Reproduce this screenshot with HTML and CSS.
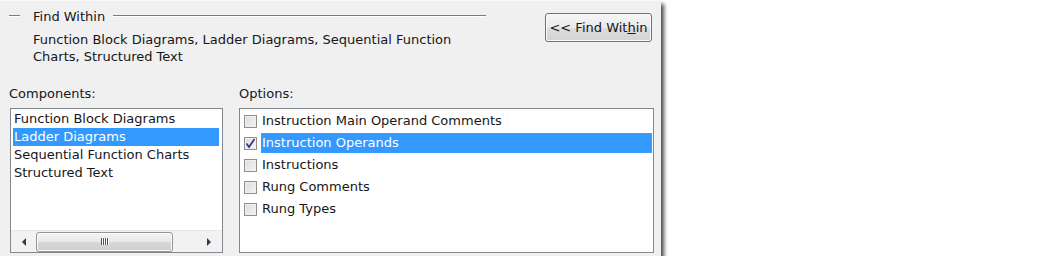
FILE: index.html
```html
<!DOCTYPE html>
<html>
<head>
<meta charset="utf-8">
<link rel="stylesheet" href="styles.css">
</head>
<body>
<div class="dialog">
  <div class="top">
    <div class="group">
      <div class="group-head">
        <span class="rule short"></span>
        <span class="group-title">Find Within</span>
        <span class="rule long"></span>
      </div>
      <div class="group-text">Function Block Diagrams, Ladder Diagrams, Sequential Function<br>Charts, Structured Text</div>
    </div>
    <button class="btn">&lt;&lt; Find Wit<u>h</u>in</button>
  </div>
  <div class="panes">
    <div class="pane">
      <div class="label">Components:</div>
      <div class="listbox comp">
        <div class="items">
          <div class="item">Function Block Diagrams</div>
          <div class="item sel">Ladder Diagrams</div>
          <div class="item">Sequential Function Charts</div>
          <div class="item">Structured Text</div>
        </div>
        <div class="hscroll">
          <span class="arrow left"></span>
          <div class="track">
            <div class="thumb"><span class="grip"></span><span class="grip"></span><span class="grip"></span><span class="grip"></span></div>
          </div>
          <span class="arrow right"></span>
        </div>
      </div>
    </div>
    <div class="pane">
      <div class="label">Options:</div>
      <div class="listbox opts">
        <div class="opt"><span class="cb"></span><span class="opt-text">Instruction Main Operand Comments</span></div>
        <div class="opt"><span class="cb checked"><svg width="11" height="11" viewBox="0 0 11 11"><path d="M1.5 5.5 L4 9 L9.5 1" fill="none" stroke="#25358a" stroke-width="1.6"/></svg></span><span class="opt-text sel">Instruction Operands</span></div>
        <div class="opt"><span class="cb"></span><span class="opt-text">Instructions</span></div>
        <div class="opt"><span class="cb"></span><span class="opt-text">Rung Comments</span></div>
        <div class="opt"><span class="cb"></span><span class="opt-text">Rung Types</span></div>
      </div>
    </div>
  </div>
</div>
</body>
</html>
```

FILE: styles.css
```css
* { box-sizing: border-box; }
html, body { margin: 0; padding: 0; background: #ffffff; }
body {
  font-family: "DejaVu Sans", Verdana, sans-serif;
  font-size: 13px;
  color: #161620;
}
.dialog {
  width: 661px;
  height: 256px;
  background: #f0f0f0;
  border-top: 1px solid #fafafa;
  box-shadow: 3px 4px 4px rgba(0,0,0,0.7);
  padding: 7px 0 0 9px;
}
.top {
  display: flex;
  align-items: flex-start;
  height: 71px;
}
.group { width: 477px; }
.group-head {
  display: flex;
  align-items: center;
  height: 16px;
}
.rule {
  height: 2px;
  border-top: 1px solid #7a7a7a;
  border-bottom: 1px solid #ffffff;
}
.rule.short { width: 11px; }
.rule.long { flex: 1; }
.group-title { padding: 0 8px 0 13px; }
.group-text {
  margin-left: 24px;
  margin-top: 7px;
  line-height: 17px;
}
.btn {
  margin-left: 59px;
  margin-top: 5px;
  width: 107px;
  height: 29px;
  border: 1px solid #707070;
  border-radius: 3px;
  background: linear-gradient(#f6f6f6 0%, #eaeaea 50%, #dcdcdc 51%, #d4d4d4 100%);
  box-shadow: inset 0 0 0 1px #fcfcfc;
  font-family: inherit;
  font-size: 13px;
  color: #161620;
  padding: 0;
}
.panes {
  display: flex;
  gap: 16px;
  margin-top: 8px;
}
.pane { display: flex; flex-direction: column; }
.label {
  height: 21px;
  line-height: 14px;
}
.listbox {
  background: #ffffff;
  border: 1px solid #828790;
  height: 145px;
}
.comp {
  width: 213px;
  margin-left: 1px;
  display: flex;
  flex-direction: column;
  padding: 1px 1px 1px 2px;
}
.items { flex: 1; }
.item {
  height: 18px;
  line-height: 18px;
  padding-left: 1px;
  margin-right: 2px;
  white-space: nowrap;
}
.item.sel { background: #3399ff; color: #ffffff; }
.hscroll {
  height: 22px;
  display: flex;
  align-items: center;
  background: #f2f2f2;
  margin: 0 -1px -1px -2px;
  border-top: 1px solid #e8e8e8;
}
.arrow {
  width: 0; height: 0;
  border-top: 4px solid transparent;
  border-bottom: 4px solid transparent;
}
.arrow.left { border-right: 4px solid #3a3a3a; margin-left: 11px; }
.arrow.right { border-left: 4px solid #3a3a3a; margin-right: 11px; }
.track { flex: 1; display: flex; padding: 0 0 0 10px; }
.thumb {
  width: 137px;
  height: 20px;
  border: 1px solid #959595;
  border-radius: 3px;
  background: linear-gradient(#f4f4f4 0%, #e8e8e8 50%, #d8d8d8 51%, #cfcfcf 100%);
  box-shadow: inset 0 0 0 1px #fafafa;
  display: flex;
  justify-content: center;
  align-items: center;
  gap: 1px;
}
.grip {
  width: 1px;
  height: 7px;
  background: #555;
  box-shadow: 1px 0 0 #fff;
}
.opts {
  width: 415px;
  padding: 1px 1px 0 4px;
}
.opt {
  height: 22px;
  display: flex;
  align-items: center;
}
.cb {
  width: 13px;
  height: 13px;
  border: 1px solid #8e8f8f;
  background: linear-gradient(135deg, #dcdcdc, #f4f4f4);
  box-shadow: inset 0 0 0 1px #f0f0f0;
  display: flex;
  align-items: center;
  justify-content: center;
  flex: none;
}
.opt-text {
  margin-left: 4px;
  padding-left: 1px;
  height: 20px;
  line-height: 20px;
  white-space: nowrap;
}
.opt-text.sel {
  margin-left: 4px;
  padding-left: 1px;
  flex: 1;
  background: #3399ff;
  color: #ffffff;
  outline: 1px dotted #c98a2a;
  outline-offset: -1px;
}
```
